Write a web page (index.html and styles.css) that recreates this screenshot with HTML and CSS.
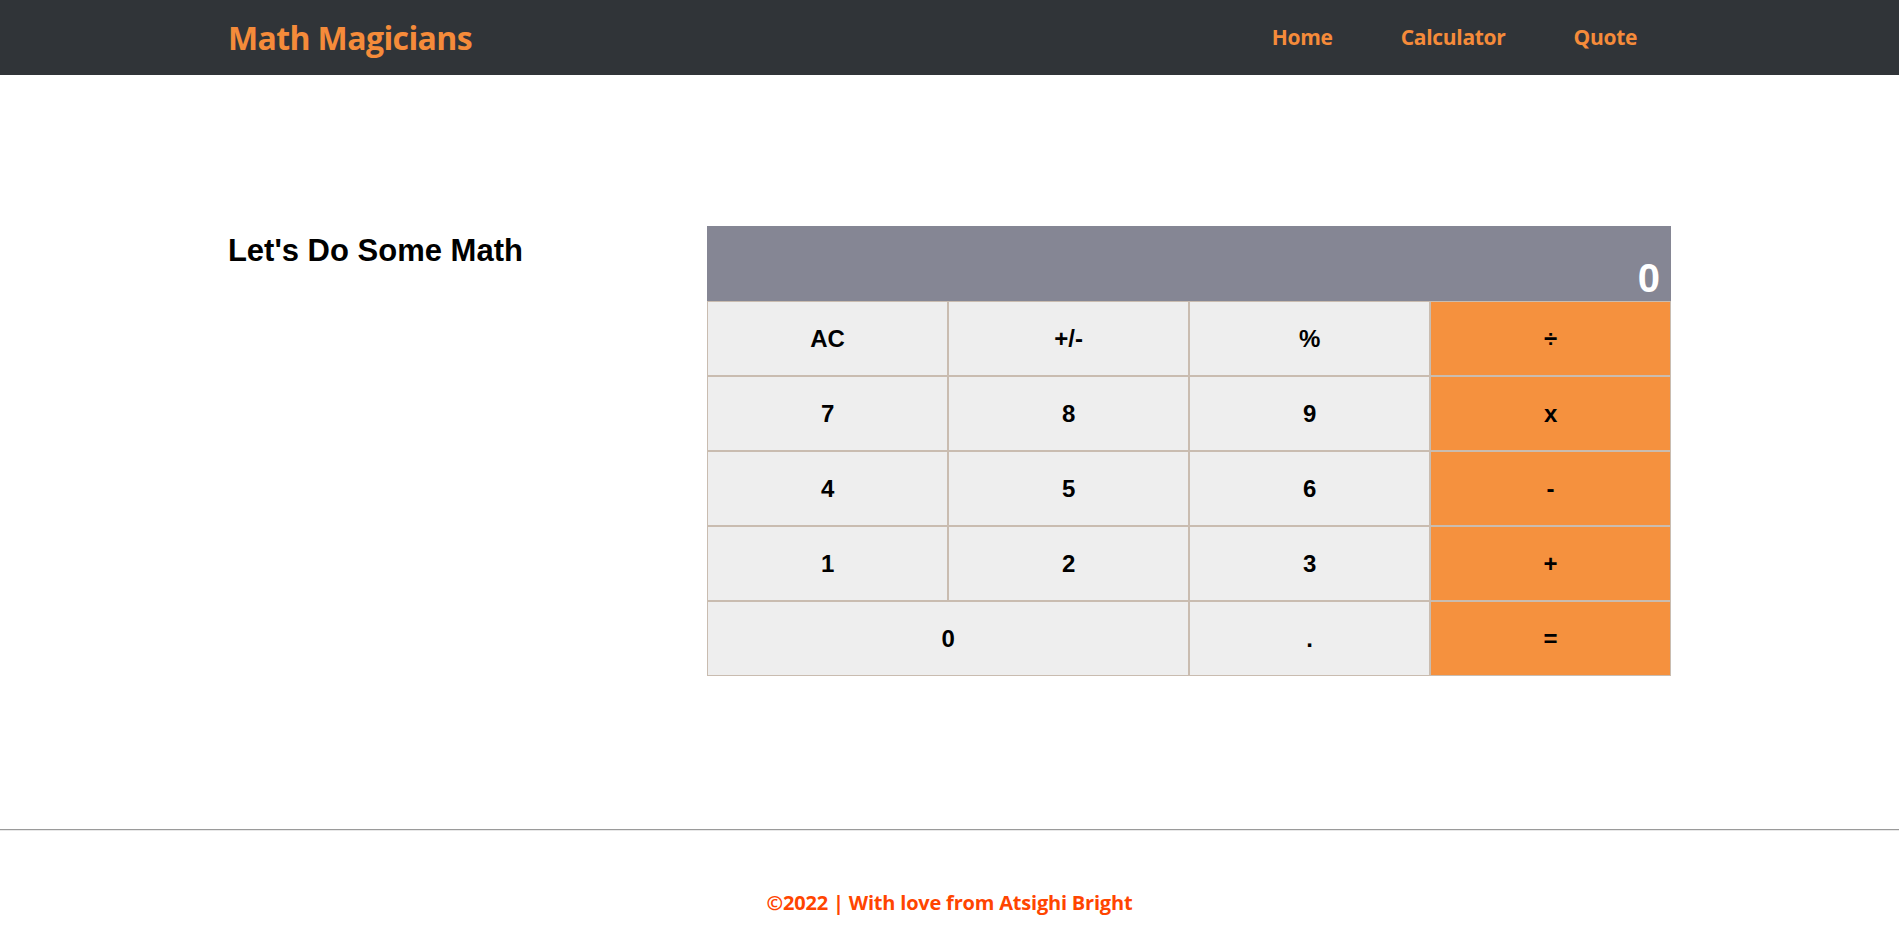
FILE: index.html
```html
<!DOCTYPE html>
<html>
    <head>
        <title>Math Magicians</title>
        <meta charset="UTF-8">
        <link rel="stylesheet" href="styles.css">
    </head>
    <body>
        <header class="topbar">
            <div class="wrap bar-inner">
                <h1 class="logo">Math Magicians</h1>
                <nav class="menu">
                    <a href="#">Home</a>
                    <a href="#">Calculator</a>
                    <a href="#">Quote</a>
                </nav>
            </div>
        </header>
        <main class="wrap page">
            <h2 class="title">Let's Do Some Math</h2>
            <div class="calc">
                <div class="screen">0</div>
                <div class="keys">
                    <button class="key">AC</button>
                    <button class="key">+/-</button>
                    <button class="key">%</button>
                    <button class="key op">÷</button>
                    <button class="key">7</button>
                    <button class="key">8</button>
                    <button class="key">9</button>
                    <button class="key op">x</button>
                    <button class="key">4</button>
                    <button class="key">5</button>
                    <button class="key">6</button>
                    <button class="key op">-</button>
                    <button class="key">1</button>
                    <button class="key">2</button>
                    <button class="key">3</button>
                    <button class="key op">+</button>
                    <button class="key zero">0</button>
                    <button class="key">.</button>
                    <button class="key op">=</button>
                </div>
            </div>
        </main>
        <hr class="line">
        <footer class="foot">
            <p>©2022 | With love from Atsighi Bright</p>
        </footer>
    </body>
</html>
```

FILE: styles.css
```css
::-webkit-scrollbar{
    width: 4px;
}

::-webkit-scrollbar-track{
    background: #f1f1f1;
}

::-webkit-scrollbar-thumb{
    background: #c1c1c1;
}

body{
    margin: 0 4px 0 0;
    background: #fff;
    font-family: "Open Sans", "Liberation Sans", sans-serif;
}

.wrap{
    width: 76%;
    margin: 0 auto;
}

.topbar{
    background: #303438;
    height: 75px;
}

.bar-inner{
    height: 100%;
    display: flex;
    align-items: center;
    justify-content: space-between;
}

.logo{
    margin: 0;
    color: #f58b3a;
    font-size: 32px;
    font-weight: 700;
    letter-spacing: -0.6px;
}

.menu{
    display: flex;
    margin-top: -2px;
}

.menu a{
    color: #f58b3a;
    text-decoration: none;
    font-size: 21px;
    font-weight: 700;
    letter-spacing: -0.3px;
    padding: 0 34px;
}

.page{
    display: flex;
    justify-content: space-between;
    align-items: flex-start;
    padding: 151px 0 153px 0;
}

.title{
    margin: 7px 0 0 0;
    font-family: "Liberation Sans", Arial, sans-serif;
    font-weight: bold;
    font-size: 31px;
    color: #000;
}

.calc{
    width: 964px;
}

.screen{
    height: 75px;
    background: #858694;
    color: #fff;
    font-family: "Liberation Sans", Arial, sans-serif;
    font-weight: bold;
    font-size: 40px;
    display: flex;
    align-items: flex-end;
    justify-content: flex-end;
    padding-right: 11px;
}

.keys{
    display: grid;
    grid-template-columns: 1fr 1fr 1fr 1fr;
}

.key{
    height: 75px;
    margin: 0;
    border: solid #c9bcb0 1px;
    background: #eeeeee;
    color: #000;
    font-family: "Liberation Sans", Arial, sans-serif;
    font-weight: bold;
    font-size: 24px;
    cursor: pointer;
}

.op{
    background: #f5913e;
}

.zero{
    grid-column: span 2;
}

.line{
    margin: 0;
    border: none;
    border-top: solid #9a9a9a 1px;
    border-bottom: solid #e8e8e8 1px;
}

.foot{
    padding: 58px 0 92px 0;
    text-align: center;
}

.foot p{
    margin: 0;
    color: #ff4500;
    font-size: 20px;
    font-weight: 700;
    letter-spacing: -0.2px;
}
```
